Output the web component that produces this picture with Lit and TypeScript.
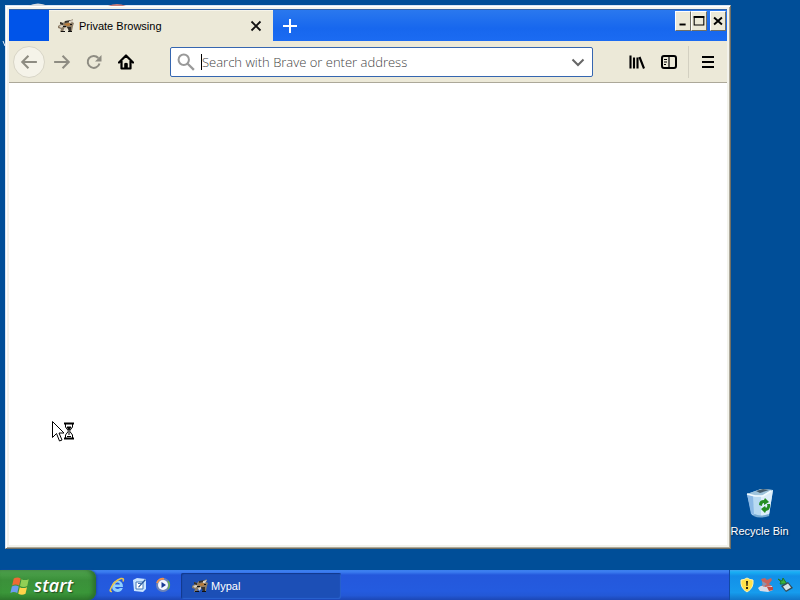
import { LitElement, html, svg, css } from "lit";
import { customElement } from "lit/decorators.js";

// The small brown-and-grey animal mark used by the browser.
const mypal = svg`
  <path d="M0 8l3-2-1-2 3 1 2-2 4 0 4-2-1 3 2 1-1 3-1 5-2 1 0-3-3-1-3 1-1 3-3 0 1-3-3-1z" fill="#8b7c66"/>
  <path d="M2 4l3 1 0 2-3-1zM7 3l6-1-2 2-4 1zM9 9l4 0 0 4-2 1-1-3z" fill="#35302b"/>
  <path d="M1 8l3-1 2 1-3 2zM11 3l4-1-2 3-2 0zM6 10l3-1 0 2-2 2z" fill="#ddd4c5"/>
  <path d="M6 6l5-1 3 2-5 1z" fill="#b97a37"/>
  <path d="M3 13h4v1H3zM10 13h4v1h-4zM5 8h3v1H5zM12 6h2v1h-2z" fill="#111"/>`;

const icon = (size: number, body: unknown) =>
  html`<svg width=${size} height=${size} viewBox="0 0 16 16" aria-hidden="true">${body}</svg>`;

@customElement("browser-window")
class BrowserWindow extends LitElement {
  static styles = css`
    :host {
      display: flex;
      flex-direction: column;
      box-sizing: border-box;
      border: 1px solid #d8e6f4;
      border-right-color: #716f64;
      border-bottom-color: #716f64;
      background: #f3f3ec;
      padding: 3px;
      box-shadow: inset 1px 1px #fff, inset -1px -1px #aca899;
    }
    button { font: inherit; color: inherit; border: 0; background: none; padding: 0; margin: 0; }
    svg { display: block; flex: none; }
    .titlebar {
      display: flex;
      height: 32px;
      box-sizing: border-box;
      border-top: 1px solid #2f62a8;
      background: linear-gradient(#2a78ee, #1767ee 60%, #1b6bf2);
    }
    .lead { width: 40px; background: #0054e9; }
    .tab {
      display: flex;
      align-items: center;
      width: 224px;
      box-sizing: border-box;
      padding: 0 8px 0 9px;
      gap: 5px;
      background: #ece9d8;
      box-shadow: inset 0 1px #f6f4ea;
    }
    .tab span { flex: 1; color: #000; white-space: nowrap; }
    .add { width: 34px; display: grid; place-items: center; }
    .caption { margin-left: auto; display: flex; align-items: flex-start; padding: 1px 1px 0 0; }
    .caption button {
      width: 16px;
      height: 20px;
      display: grid;
      place-items: center;
      background: #ece9d8;
      border: 1px solid;
      border-color: #fff #716f64 #716f64 #fff;
    }
    .caption .close { margin-left: 3px; }
    .toolbar {
      display: flex;
      align-items: center;
      height: 42px;
      box-sizing: border-box;
      border-bottom: 1px solid #aca899;
      background: #ece9d8;
      padding: 1px 3px 0 4px;
    }
    .tool { width: 32px; height: 32px; display: grid; place-items: center; color: #000; }
    .tool.dim { color: #8e8c82; }
    .tool.back { background: #f5f3e9; border: 1px solid #d8d5c6; border-radius: 50%; margin-right: 1px; }
    .address {
      flex: 1;
      display: flex;
      align-items: center;
      height: 30px;
      box-sizing: border-box;
      margin: 0 28px;
      border: 1px solid #3566b0;
      border-radius: 2px;
      background: #fff;
      padding: 0 6px;
      gap: 6px;
      color: #777;
    }
    .field { flex: 1; display: flex; align-items: center; min-width: 0; }
    .caret { width: 1px; height: 16px; background: #000; }
    input {
      flex: 1;
      min-width: 0;
      height: 24px;
      border: 0;
      outline: 0;
      padding: 0;
      background: none;
      font: 300 13px "Open Sans", "Noto Sans", sans-serif;
    }
    input::placeholder { color: #444; opacity: 1; }
    .menu { border-left: 1px solid #d3d0c1; margin-left: 3px; padding-left: 3px; width: 36px; }
    .page { flex: 1; background: #fff; }
  `;

  render() {
    return html`
      <div class="titlebar">
        <div class="lead"></div>
        <div class="tab">
          ${icon(16, mypal)}
          <span>Private Browsing</span>
          <button aria-label="Close tab">
            ${icon(18, svg`<path d="M4 4l8 8M12 4l-8 8" stroke="#111" stroke-width="1.6"/>`)}
          </button>
        </div>
        <button class="add" aria-label="New tab">
          ${icon(16, svg`<path d="M8 1v14M1 8h14" stroke="#fff" stroke-width="2"/>`)}
        </button>
        <div class="caption">
          <button aria-label="Minimize">
            ${icon(14, svg`<path d="M4 12h7" stroke="#000" stroke-width="2.2"/>`)}
          </button>
          <button aria-label="Maximize">
            ${icon(14, svg`<path d="M2.5 3h11v9.500h-11z" fill="none" stroke="#000" stroke-width="1.2"/><path d="M2 3.500h12" stroke="#000" stroke-width="2"/>`)}
          </button>
          <button class="close" aria-label="Close">
            ${icon(14, svg`<path d="M3.500 4l9 8M12.500 4l-9 8" stroke="#000" stroke-width="2.200"/>`)}
          </button>
        </div>
      </div>
      <div class="toolbar">
        <button class="tool dim back" aria-label="Back">
          ${icon(18, svg`<path d="M15 8H2M7.500 2.500L2 8l5.500 5.500" fill="none" stroke="currentColor" stroke-width="1.800"/>`)}
        </button>
        <button class="tool dim" aria-label="Forward">
          ${icon(18, svg`<path d="M1 8h13M8.500 2.500L14 8l-5.500 5.500" fill="none" stroke="currentColor" stroke-width="1.800"/>`)}
        </button>
        <button class="tool dim" aria-label="Reload">
          ${icon(16, svg`<path d="M13.500 9.500a6 6 0 1 1-1.200-5.500" fill="none" stroke="currentColor" stroke-width="2"/><path d="M15.500 1v6.500H9z" fill="currentColor"/>`)}
        </button>
        <button class="tool" aria-label="Home">
          ${icon(16, svg`<path d="M1 8.500L8 1.500l7 7M3.500 7v7.500h9V7" fill="none" stroke="currentColor" stroke-width="2.200" stroke-linejoin="round" stroke-linecap="round"/><path d="M6.200 14V9.500q1.800-1.500 3.600 0V14z" fill="currentColor"/>`)}
        </button>
        <div class="address">
          ${icon(18, svg`<circle cx="6" cy="6" r="4.600" fill="none" stroke="#999" stroke-width="1.800"/><path d="M9.500 9.500l5.500 5.500" stroke="#999" stroke-width="2"/>`)}
          <div class="field">
            <i class="caret"></i>
            <input aria-label="Address" placeholder="Search with Brave or enter address" />
          </div>
          <button aria-label="Show history">
            ${icon(16, svg`<path d="M2.500 5.500L8 11l5.500-5.500" fill="none" stroke="#666" stroke-width="2"/>`)}
          </button>
        </div>
        <button class="tool" aria-label="Library">
          ${icon(16, svg`<path d="M1.500 1.500v13M5 3.500v11M8.500 3.500v11M10.500 3l4.500 11.500" stroke="currentColor" stroke-width="2.100"/>`)}
        </button>
        <button class="tool" aria-label="Sidebars">
          ${icon(16, svg`<rect x="1" y="2" width="14" height="12" rx="2" fill="none" stroke="currentColor" stroke-width="2"/><path d="M8 2v12M3 5.500h3M3 8h3M3 10.500h2" stroke="currentColor" stroke-width="1.200"/>`)}
        </button>
        <button class="tool menu" aria-label="Menu">
          ${icon(16, svg`<path d="M2 3h12M2 8h12M2 13h12" stroke="currentColor" stroke-width="2"/>`)}
        </button>
      </div>
      <main class="page"></main>
    `;
  }
}

@customElement("task-bar")
class TaskBar extends LitElement {
  static styles = css`
    :host {
      display: flex;
      height: 30px;
      background: linear-gradient(#3d80ee, #3a7cf0 2px, #2458dc 5px, #245bdf 70%, #2358d6 85%, #1c47b5);
      color: #fff;
    }
    button { font: inherit; color: inherit; border: 0; background: none; padding: 0; margin: 0; }
    svg { display: block; flex: none; }
    .start {
      display: flex;
      align-items: center;
      gap: 4px;
      width: 96px;
      padding-left: 10px;
      border-radius: 0 8px 8px 0;
      background: linear-gradient(#5caa5c, #4a9f49 3px, #3b903a 10px, #3a9639 75%, #2f7c2e);
      box-shadow: inset -3px 0 4px #2b6f2b, 1px 0 2px #1c48a8;
      font: italic 600 18px "Open Sans", "Noto Sans", sans-serif;
      text-shadow: 1px 1px 1px #234f20;
    }
    .start svg { margin-top: 1px; }
    .quick { display: flex; align-items: center; gap: 7px; padding: 0 10px 0 13px; }
    .task {
      display: flex;
      align-items: center;
      gap: 3px;
      width: 160px;
      height: 26px;
      margin-top: 3px;
      padding-left: 11px;
      border-radius: 2px;
      background: #1c4fb6;
      box-shadow: inset 1px 1px 1px #12388c, inset -1px -1px 1px #2a62cf;
    }
    .tray {
      display: flex;
      align-items: center;
      gap: 3px;
      margin-left: auto;
      width: 71px;
      box-sizing: border-box;
      padding-left: 9px;
      border-left: 1px solid #104aa5;
      background: linear-gradient(#3fa6f0, #18b0f4 2px, #1290e8 6px, #169ced 75%, #1176c9);
    }
  `;

  render() {
    return html`
      <button class="start">
        ${icon(20, svg`
          <path d="M3 2q3-1.800 5.500 0L7.300 7.500Q4.500 6 1.700 7.500z" fill="#ee6a35"/>
          <path d="M9.200 2.500q2.600 1.500 5.800 0L13.800 8q-2.800 1.400-5.800 0z" fill="#91cf55"/>
          <path d="M1.500 8.300q2.800-1.500 5.500 0L5.800 13.500q-2.800-1.600-5.500 0z" fill="#6c9df0"/>
          <path d="M7.800 8.900q2.700 1.500 5.800 0l-1.200 5.300q-2.800 1.500-5.800 0z" fill="#ffd34a"/>`)}
        start
      </button>
      <div class="quick">
        <button aria-label="Internet Explorer">
          ${icon(16, svg`
            <path d="M14 10H6q.4 2 2.600 2 1.600 0 2.200-1h3Q12.500 15 8.500 15 3 14.500 3 9.200 3.500 4 8.500 3.500 14 4 14 10zM6 7.500h5q-.5-2-2.500-2T6 7.500z" fill="#8fd0ff"/>
            <path d="M3 14.500q-3 .500-1-3.500Q5 4 12 1.500q3.500-.5 2 3" fill="none" stroke="#e9c44e" stroke-width="1.600"/>`)}
        </button>
        <button aria-label="Show Desktop">
          ${icon(16, svg`
            <path d="M1 3l4-2 9 1v10l-3 3-9-1z" fill="#c9e4ff"/>
            <path d="M4 5h7v7H4z" fill="#fff" stroke="#4478b8"/>
            <path d="M6 10l7-8 1 1-7 7.500z" fill="#24559d"/><path d="M6 6.500h3" stroke="#4478b8"/>`)}
        </button>
        <button aria-label="Media Player">
          ${icon(16, svg`
            <circle cx="8" cy="8" r="7" fill="#6d83b8"/>
            <path d="M2 6a6 6 0 0 1 7-4" fill="none" stroke="#f1904c" stroke-width="2"/>
            <path d="M13 4a7 7 0 0 1 0 8" fill="none" stroke="#6ab150" stroke-width="1.500"/>
            <circle cx="8" cy="8" r="5" fill="#f4f7ff"/><path d="M6.500 5l4.500 3-4.500 3z" fill="#183a94"/>`)}
        </button>
      </div>
      <button class="task">${icon(16, mypal)}Mypal</button>
      <div class="tray">
        ${icon(16, svg`
          <path d="M8 1q3 2 6 2 1 8-6 12Q1 11 2 3q3 0 6-2z" fill="#ffe14a" stroke="#fff3b0"/>
          <path d="M7 4h2l-.4 5H7.400zM7 10h2v2H7z" fill="#2c2610"/>`)}
        ${icon(16, svg`
          <path d="M3 2l4-1 2 2 4-2 1 2-3 4 3 2-5 2-6-1 2-3z" fill="#c9645c"/>
          <path d="M0 11q4-4 7-1l7-1 1 4-5 2-8-1z" fill="#d9dce8"/><path d="M9 10h6v3l-4 1z" fill="#c24a42"/>
          <path d="M4 4l5 3-4 3z" fill="#8e94ae"/>`)}
        ${icon(16, svg`
          <path d="M1 2l4 2 1-3 4 6-7 0 1-2z" fill="#3bb13c" stroke="#1c7830"/>
          <path d="M4 9l7-4 5 6-7 4z" fill="#354c56"/><path d="M6 9.500l5-3 3 4-5 3z" fill="#d5e5e9"/>`)}
      </div>
    `;
  }
}

@customElement("app-root")
class AppRoot extends LitElement {
  static styles = css`
    :host {
      display: flex;
      flex-direction: column;
      height: 100vh;
      overflow: hidden;
      position: relative;
      background: #004e98;
      font: 11px/14px "Liberation Sans", Arial, sans-serif;
      cursor: default;
    }
    .desktop { flex: 1; display: flex; align-items: stretch; padding: 5px 0 21px 5px; }
    browser-window { flex: 1; min-width: 0; }
    .shortcuts { width: 69px; display: flex; flex-direction: column; justify-content: flex-end; }
    .bin {
      display: flex;
      flex-direction: column;
      align-items: center;
      gap: 5px;
      margin-bottom: 11px;
      padding-right: 12px;
      color: #fff;
      text-decoration: none;
      white-space: nowrap;
      text-shadow: 1px 1px 1px #002a58;
    }
    .peek { position: absolute; left: 0; top: 0; }
    .pointer { position: absolute; left: 52px; top: 421px; }
  `;

  render() {
    return html`
      <svg class="peek" width="140" height="50" viewBox="0 0 140 50" aria-hidden="true">
        <path d="M28 6q10-5 20 0z" fill="#d8dde0"/>
        <path d="M108 6q9-4 18 0z" fill="#c97d78"/>
        <path d="M3 41l2 5" stroke="#e7eff8"/>
      </svg>
      <div class="desktop">
        <browser-window></browser-window>
        <div class="shortcuts">
          <a class="bin" href="#">
            <svg width="32" height="32" viewBox="0 0 32 32" aria-hidden="true">
              <path d="M3 7l14-5 12 1-4 25q-7 4-17 0z" fill="#b8daf2"/>
              <path d="M3 7l6 2 1 19-3-1z" fill="#8bb9e6"/>
              <path d="M3 7l14-5 12 1-10 6z" fill="#9fc4dc"/>
              <path d="M12 4l7-2 6 1-9 3z" fill="#465c6b"/>
              <path d="M17 9l12-6-4 25-8 2z" fill="#dceefa"/>
              <path d="M3 7l8 2 8 0 8-5" fill="none" stroke="#f2fbff" stroke-width="1.500"/>
              <path d="M10 28q6 3 15 0" fill="none" stroke="#75a9d2" stroke-width="2"/>
              <path d="M15 18q0-5 5-5l1-2 4 4-5 3 0-2q-2 0-2 3z" fill="#258d22"/>
              <path d="M26 17q1 6-4 7l-1 2-4-4 4-3 1 2q2-1 1-4z" fill="#258d22"/>
            </svg>
            Recycle Bin
          </a>
        </div>
      </div>
      <task-bar></task-bar>
      <svg class="pointer" width="24" height="22" viewBox="0 0 24 22" aria-hidden="true">
        <path d="M.5.500v16l4-4 3 7.500 2.500-1-3-7H12z" fill="#fff" stroke="#000"/>
        <path d="M12 2.500h10M12 17.500h10" stroke="#000" stroke-width="2"/>
        <path d="M13.500 3v3l3 4-3 4v3h7v-3l-3-4 3-4V3z" fill="#fff" stroke="#000"/>
        <path d="M15 6h4l-2 3zM17 11v3M15 15.500h4" fill="#000" stroke="#000"/>
      </svg>
    `;
  }
}
